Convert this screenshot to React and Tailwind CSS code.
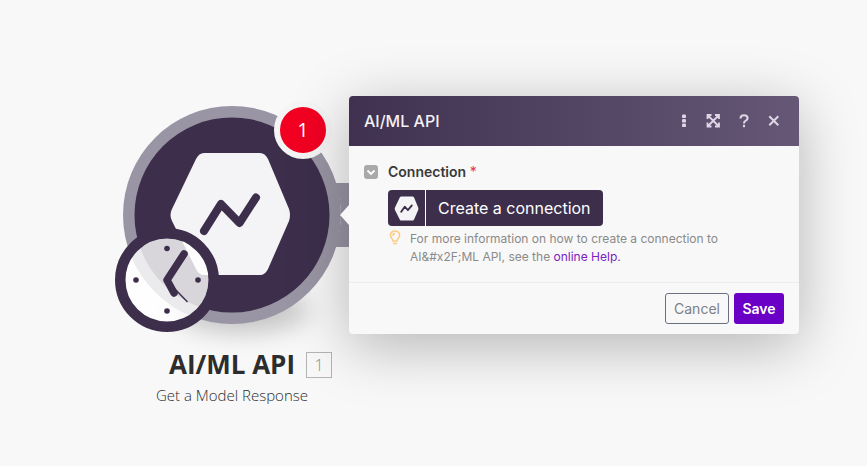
import React from "react";

const HEX =
  "M204 153H260Q265 153 268 159L289 209Q291 215 289 221L268 269Q265 275 260 275H204Q199 275 196 269L172 221Q169 215 172 209L196 159Q199 153 204 153Z";

function ModuleDrawing() {
  return (
    <svg className="block w-full overflow-visible" viewBox="108 96 248 244" aria-hidden="true">
      <defs>
        <filter id="soft" x="-50%" y="-100%" width="200%" height="300%">
          <feGaussianBlur stdDeviation="13" />
        </filter>
      </defs>
      <ellipse cx="242" cy="310" rx="66" ry="22" fill="#000" opacity="0.22" filter="url(#soft)" />
      <path d="M334 183H356V247H334Q341 232 341 215T334 183Z" fill="#9a95a4" />
      <circle cx="232" cy="215" r="109" fill="#9a95a4" />
      <circle cx="232" cy="215" r="97.5" fill="#3d2f4c" />
      <path d={HEX} fill="#f4f4f6" />
      <path d="M204 231L221 204L239.5 223L256 197.5" fill="none" stroke="#3d2f4c" strokeWidth="8" strokeLinecap="round" strokeLinejoin="round" />
      <circle cx="167" cy="280" r="42" fill="#fff" fillOpacity="0.8" />
      <circle cx="167" cy="280" r="46.75" fill="none" stroke="#3d2f4c" strokeWidth="10.5" />
      <g fill="#3d2f4c">
        <circle cx="167" cy="248.5" r="2.8" />
        <circle cx="167" cy="311" r="2.8" />
        <circle cx="136" cy="280" r="2.8" />
        <circle cx="198" cy="280" r="2.8" />
      </g>
      <path d="M184 254L167 280L174 293" fill="none" stroke="#3d2f4c" strokeWidth="7.5" strokeLinecap="round" strokeLinejoin="round" />
      <path d="M172 286L187.5 302" stroke="#3d2f4c" strokeWidth="1.5" />
    </svg>
  );
}

function ModuleNode() {
  return (
    <section className="absolute left-[108px] top-24 w-[248px] text-center font-['Open_Sans','Noto_Sans',sans-serif] text-[#2d2d2d]">
      <ModuleDrawing />
      <span className="absolute left-[166px] top-[5px] flex size-[58px] items-center justify-center rounded-full border-6 border-[#f5f5f6] bg-[#f20022] text-xl text-white">
        1
      </span>
      <div className="mt-2 flex justify-center">
        <h1 className="relative text-[26px] leading-8 font-bold">
          AI/ML API
          <span className="absolute top-1 left-full ml-[11px] flex size-[26px] items-center justify-center border border-[#b5b5b5] text-base font-light text-[#8c8c8c]">
            1
          </span>
        </h1>
      </div>
      <p className="mt-[3px] text-[15px] leading-6 font-light">Get a Model Response</p>
    </section>
  );
}

function HeaderButton({ label, children }) {
  return (
    <button type="button" aria-label={label} className="flex size-[30px] items-center justify-center text-[#ddd6e4]">
      {children}
    </button>
  );
}

function ConnectionPanel() {
  return (
    <section className="absolute left-[349px] top-24 w-[450px] rounded bg-[#f8f8f8] font-[Inter,sans-serif] shadow-[0_12px_60px_rgba(0,0,0,0.28)]">
      <span className="absolute top-[109px] -left-[9px] h-5 w-[9px] bg-[#f8f8f8] [clip-path:polygon(100%_0,0_50%,100%_100%)]" />
      <header className="flex h-[50px] items-center rounded-t bg-linear-to-r from-[#3f314f] to-[#665777] pr-[10px] pl-[15px]">
        <h2 className="flex-1 text-base font-medium text-[#f3f0f5]">AI/ML API</h2>
        <HeaderButton label="More options">
          <svg className="size-4" viewBox="0 0 16 16" fill="currentColor">
            <rect x="6" y="1.5" width="4" height="3.6" rx="1.2" />
            <rect x="6" y="6" width="4" height="3.6" rx="1.2" />
            <rect x="6" y="10.5" width="4" height="3.6" rx="1.2" />
          </svg>
        </HeaderButton>
        <HeaderButton label="Expand">
          <svg className="size-4" viewBox="0 0 16 16" fill="none" stroke="currentColor" strokeWidth="1.8">
            <path d="M1.5 6V2H5.5M9 2H13V6M13 9.500V13.500H9M5.500 13.500H1.500V9.500M2 2.500L12.500 13M12.500 2.500L2 13" />
          </svg>
        </HeaderButton>
        <HeaderButton label="Help">
          <svg className="size-4" viewBox="0 0 16 16" fill="none" stroke="currentColor" strokeWidth="2.1">
            <path d="M4.500 5.500Q4.500 2.200 8 2.200T11.600 5Q11.600 6.800 9.800 7.600Q8 8.400 8 10.500" />
            <path d="M8 11.800V14.200" />
          </svg>
        </HeaderButton>
        <HeaderButton label="Close">
          <svg className="size-4" viewBox="0 0 16 16" fill="none" stroke="currentColor" strokeWidth="2">
            <path d="M3.300 3.300L12.300 12.300M12.300 3.300L3.300 12.300" />
          </svg>
        </HeaderButton>
      </header>

      <div className="px-[15px] pt-4 pb-4">
        <div className="flex items-center gap-[10px]">
          <button type="button" aria-label="Collapse connection" className="flex size-[14px] items-center justify-center rounded-[3px] bg-[#a9a9a9]">
            <svg className="size-[10px]" viewBox="0 0 10 10" fill="none" stroke="#fff" strokeWidth="1.8">
              <path d="M1.5 3.5L5 7L8.5 3.5" />
            </svg>
          </button>
          <h3 className="text-sm leading-5 font-semibold text-[#3a3a3a]">
            Connection <span className="font-normal text-[#e8315f]">*</span>
          </h3>
        </div>
        <div className="mt-2 pl-6">
          <button type="button" className="flex h-9 items-stretch overflow-hidden rounded bg-[#3d2f4c] text-base text-white">
            <span className="flex w-[38px] items-center justify-center border-r border-white">
              <svg className="size-[25px]" viewBox="167 151 126 126">
                <path d={HEX} fill="#f4f4f6" />
                <path d="M203 231L221 205L237 222L257 198" fill="none" stroke="#3d2f4c" strokeWidth="9" strokeLinecap="round" strokeLinejoin="round" />
              </svg>
            </span>
            <span className="flex items-center px-3">Create a connection</span>
          </button>
          <div className="mt-1 flex gap-2">
            <svg className="h-[15px] w-[14px] shrink-0" viewBox="0 0 14 15" fill="none" stroke="#fbcd84" strokeWidth="1.6">
              <path d="M5 11Q5 9.500 3.500 8Q1.800 6 2.600 3.700Q4 1 7 1T11.400 3.700Q12.200 6 10.500 8Q9 9.500 9 11ZM5 13.500H9M4.800 5.800Q5 3.600 7 3.600" />
            </svg>
            <p className="flex-1 pr-10 text-xs leading-[18px] text-[#8a8a8a]">
              For more information on how to create a connection to AI&amp;#x2F;ML API, see the{" "}
              <a href="#help" className="text-[#7a22c0]">online Help.</a>
            </p>
          </div>
        </div>
      </div>

      <footer className="flex justify-end gap-[5px] border-t border-[#ececec] px-[15px] py-[10px]">
        <button type="button" className="h-[31px] w-16 rounded-[3px] border border-[#6b7080] text-sm text-[#7c8086]">Cancel</button>
        <button type="button" className="h-[31px] w-[50px] rounded-[3px] bg-[#6a00c5] text-sm font-semibold text-white">Save</button>
      </footer>
    </section>
  );
}

export default function App() {
  return (
    <main className="relative h-screen overflow-hidden bg-[#f8f8f8]">
      <ModuleNode />
      <ConnectionPanel />
    </main>
  );
}
